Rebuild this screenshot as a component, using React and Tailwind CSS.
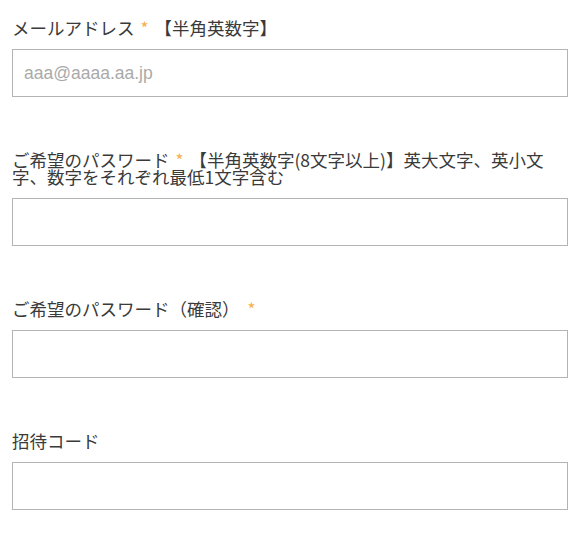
export default function App() {
  const fields = [
    { label: 'メールアドレス', required: true, note: '【半角英数字】', placeholder: 'aaa@aaaa.aa.jp' },
    { label: 'ご希望のパスワード', required: true, note: '【半角英数字(8文字以上)】英大文字、英小文', note2: '字、数字をそれぞれ最低1文字含む' },
    { label: 'ご希望のパスワード（確認）', required: true, spaced: true },
    { label: '招待コード', required: false },
  ];

  return (
    <div className="min-h-screen bg-white pl-3 pr-[18px] pt-[19px] text-[#3a3a3a]" style={{ fontFamily: '"Noto Sans CJK JP", "Noto Sans", sans-serif' }}>
      {fields.map((f, i) => (
        <div key={i} className="mb-[54px]">
          <label className="block mb-[13px] text-[17.5px] leading-[17px]">
            {f.label}
            {f.required && (
              <span className={`text-[17px] text-[#f7b14a] ${f.spaced ? 'ml-[8px]' : 'ml-[6px]'}`}>*</span>
            )}
            {f.note && <span className="ml-[6px]">{f.note}</span>}
            {f.note2 && <br />}
            {f.note2}
          </label>
          <input
            type="text"
            placeholder={f.placeholder || ''}
            className="block w-full h-[48px] border border-[#b3b3b3] bg-white px-[11px] text-[17.5px] text-[#333] outline-none placeholder:text-[#aaaaaa]"
            style={{ fontFamily: '"Liberation Sans", Arial, sans-serif' }}
          />
        </div>
      ))}
    </div>
  );
}
